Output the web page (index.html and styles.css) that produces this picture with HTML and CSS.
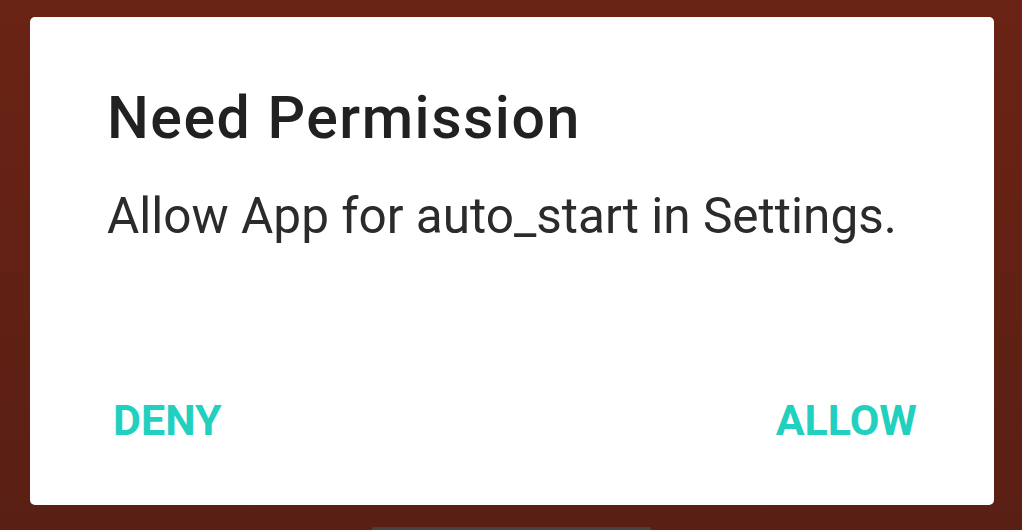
FILE: index.html
```html
<!DOCTYPE html>
<html lang="en">
<head>
	<meta charset="UTF-8">
	<title>Need Permission</title>
	<link rel="stylesheet" href="styles.css">
</head>
<body>
	<div class="screen">
		<div class="dialog">
			<h1 class="title">Need Permission</h1>
			<p class="message">Allow App for auto_start in Settings.</p>
			<div class="actions">
				<button class="action">DENY</button>
				<button class="action">ALLOW</button>
			</div>
		</div>
		<div class="navBar"></div>
	</div>
</body>
</html>
```

FILE: styles.css
```css
html, body {
	margin: 0;
	padding: 0;
}

body {
	background: #652114;
	font-family: Roboto, "Noto Sans", sans-serif;
	width: 1022px;
	height: 530px;
	overflow: hidden;
}

.screen {
	height: 530px;
	display: flex;
	flex-direction: column;
	align-items: center;
	background: linear-gradient(#6a2314, #5a1f14);
}

.dialog {
	box-sizing: border-box;
	width: 964px;
	height: 488px;
	margin: 17px 28px 0 30px;
	align-self: flex-start;
	background: #fff;
	border-radius: 5px;
	padding: 0 77px;
	display: flex;
	flex-direction: column;
}

.title {
	margin: 71px 0 0;
	font-size: 59px;
	font-weight: 500;
	letter-spacing: 1.5px;
	color: #212121;
	line-height: 1;
}

.message {
	margin: 45px 0 0;
	font-size: 49.5px;
	font-weight: 400;
	color: #2b2b2b;
	line-height: 1;
}

.actions {
	margin-top: auto;
	margin-bottom: 63px;
	display: flex;
	justify-content: space-between;
}

.action {
	font-family: inherit;
	background: none;
	border: none;
	padding: 0 0 0 6px;
	font-size: 43px;
	font-weight: 700;
	color: #22d0c0;
	line-height: 1;
}

.action:last-child {
	padding: 0;
}

.navBar {
	margin-top: auto;
	width: 279px;
	height: 3px;
	background: #4a4240;
	border-radius: 2px 2px 0 0;
}
```
